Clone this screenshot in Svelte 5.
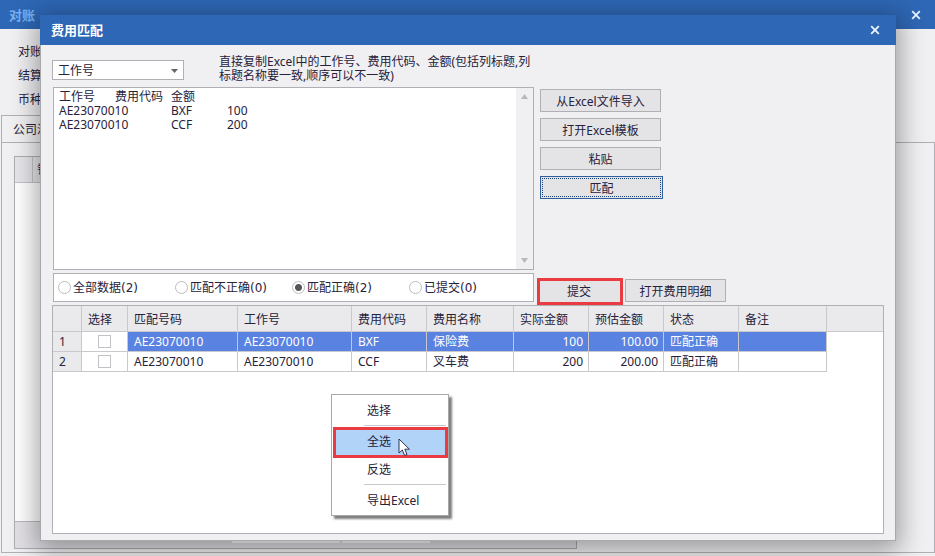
<script>
  let keyField = $state('工作号');
  let filter = $state('ok');
  let pasted = $state('工作号\t费用代码\t金额\nAE23070010\tBXF\t100\nAE23070010\tCCF\t200');

  const filters = [
    { id: 'all', label: '全部数据(2)' },
    { id: 'bad', label: '匹配不正确(0)' },
    { id: 'ok', label: '匹配正确(2)' },
    { id: 'sent', label: '已提交(0)' }
  ];

  const columns = ['选择', '匹配号码', '工作号', '费用代码', '费用名称', '实际金额', '预估金额', '状态', '备注'];

  let rows = $state([
    { code: 'AE23070010', job: 'AE23070010', fee: 'BXF', name: '保险费', actual: '100', planned: '100.00', status: '匹配正确', note: '', checked: false },
    { code: 'AE23070010', job: 'AE23070010', fee: 'CCF', name: '叉车费', actual: '200', planned: '200.00', status: '匹配正确', note: '', checked: false }
  ]);
  let current = $state(0);

  function checkAll() {
    rows.forEach((row) => (row.checked = true));
  }
  function invert() {
    rows.forEach((row) => (row.checked = !row.checked));
  }
</script>

{#snippet cross()}
  <svg width="10" height="10" viewBox="0 0 10 10" aria-hidden="true">
    <path d="M1.2 1.2 8.8 8.8M8.8 1.2 1.2 8.8" stroke="#eaf6ff" stroke-width="1.8" fill="none" />
  </svg>
{/snippet}

<div class="screen">
  <div class="parent">
    <header class="parent-title">
      <span>对账</span>
      <button class="close" aria-label="关闭对账">{@render cross()}</button>
    </header>
    <div class="fields">
      <span>对账</span>
      <span>结算</span>
      <span>币种</span>
    </div>
    <div class="tabs"><button class="tab">公司汇</button></div>
    <div class="panel">
      <div class="back-grid">
        <div class="back-head"><span class="gutter"></span><span class="back-col">销</span></div>
        <div class="back-rows"></div>
        <div class="back-foot"><span class="sum"></span><span class="sum narrow"></span></div>
      </div>
    </div>
  </div>

  <div class="dialog" role="dialog" aria-labelledby="dialog-title">
    <header class="dialog-title">
      <span id="dialog-title">费用匹配</span>
      <button class="close" aria-label="关闭">{@render cross()}</button>
    </header>

    <div class="content">
      <div class="top-row">
        <div class="combo">
          <select bind:value={keyField} aria-label="匹配字段">
            <option>工作号</option>
          </select>
          <svg width="7" height="4" viewBox="0 0 7 4" aria-hidden="true"><path d="M0 0H7L3.5 4Z" fill="#666" /></svg>
        </div>
        <p class="hint">直接复制Excel中的工作号、费用代码、金额(包括列标题,列标题名称要一致,顺序可以不一致)</p>
      </div>

      <div class="paste-row">
        <div class="paste-box">
          <textarea bind:value={pasted} aria-label="粘贴内容" spellcheck="false"></textarea>
          <div class="scroll">
            <svg width="7" height="5" viewBox="0 0 7 5" aria-hidden="true"><path d="M3.5 0 7 5H0Z" fill="#b9b9bd" /></svg>
            <svg width="7" height="5" viewBox="0 0 7 5" aria-hidden="true"><path d="M0 0H7L3.5 5Z" fill="#b9b9bd" /></svg>
          </div>
        </div>
        <div class="actions">
          <button class="btn">从Excel文件导入</button>
          <button class="btn">打开Excel模板</button>
          <button class="btn">粘贴</button>
          <button class="btn default">匹配</button>
        </div>
      </div>

      <div class="filter-row">
        <div class="filters">
          {#each filters as f}
            <label><input type="radio" name="filter" value={f.id} bind:group={filter} />{f.label}</label>
          {/each}
        </div>
        <button class="btn submit">提交</button>
        <button class="btn detail">打开费用明细</button>
      </div>

      <div class="grid">
        <table>
          <colgroup>
            <col class="w-no" /><col class="w-check" /><col class="w-code" /><col class="w-job" /><col class="w-m" />
            <col class="w-name" /><col class="w-m" /><col class="w-m" /><col class="w-m" /><col class="w-note" /><col />
          </colgroup>
          <thead>
            <tr>
              <th></th>
              {#each columns as c}<th>{c}</th>{/each}
              <th class="rest"></th>
            </tr>
          </thead>
          <tbody>
            {#each rows as row, i}
              <tr class:current={current === i} onclick={() => (current = i)}>
                <th>{i + 1}</th>
                <td class="check"><input type="checkbox" bind:checked={row.checked} aria-label="选择第{i + 1}行" /></td>
                <td>{row.code}</td>
                <td>{row.job}</td>
                <td>{row.fee}</td>
                <td>{row.name}</td>
                <td class="num">{row.actual}</td>
                <td class="num">{row.planned}</td>
                <td>{row.status}</td>
                <td>{row.note}</td>
                <td class="rest"></td>
              </tr>
            {/each}
          </tbody>
        </table>

        <div class="menu" role="menu">
          <button role="menuitem">选择</button>
          <hr />
          <button role="menuitem" class="active" onclick={checkAll}>全选</button>
          <button role="menuitem" class="short" onclick={invert}>反选</button>
          <hr class="low" />
          <button role="menuitem">导出Excel</button>
          <svg class="pointer" width="14" height="19" viewBox="0 0 14 19" aria-hidden="true">
            <path d="M1 1V15L4.3 12 6.6 17.5 9 16.5 6.8 11.2H11.4Z" fill="#fff" stroke="#2c3550" stroke-width="1" />
          </svg>
        </div>
      </div>
    </div>
  </div>
</div>

<style>
  :global(body) { margin: 0; }
  .screen, .screen * { box-sizing: border-box; }
  .screen {
    position: relative;
    min-height: 100vh;
    overflow: hidden;
    display: flex;
    font: 12px/14px "Noto Sans", "Noto Sans CJK SC", sans-serif;
    color: #27223a;
    background: #f0eff1;
  }
  button, select, textarea { font: inherit; color: inherit; margin: 0; }

  .parent { flex: 1; display: flex; flex-direction: column; padding-bottom: 3px; }
  .parent-title, .dialog-title {
    display: flex;
    justify-content: space-between;
    align-items: center;
    background: #2e67b5;
    font-size: 13px;
    font-weight: bold;
  }
  .parent-title { height: 29px; padding: 0 9px; color: #77b0f0; }
  .dialog-title { height: 31px; margin: 0 -1px; padding: 0 11px; border-top: 1px solid #27589c; color: #fff; }
  .close { display: flex; align-items: center; justify-content: center; width: 20px; height: 20px; padding: 0; border: 0; background: none; }
  .fields { display: flex; flex-direction: column; gap: 10px; padding: 16px 18px 0; height: 86px; }
  .tabs { display: flex; height: 27px; padding-left: 1px; }
  .tab { width: 80px; padding: 2px 0 0 11px; text-align: left; border: 1px solid #b0b0b4; border-bottom: 0; background: #f0eff1; }
  .panel { flex: 1; display: flex; margin-left: 1px; padding: 13px 12px 3px; border: 1px solid #b0b0b4; }
  .back-grid { flex: 0 1 563px; display: flex; flex-direction: column; border: 1px solid #adadb2; background: #fff; }
  .back-head { display: flex; height: 26px; background: #e6e5e9; border-bottom: 1px solid #c4c4c8; }
  .gutter { width: 18px; border-right: 1px solid #c4c4c8; }
  .back-col { padding: 6px 4px; }
  .back-rows { flex: 1; }
  .back-foot { display: flex; gap: 2px; height: 27px; padding: 0 0 5px 217px; background: #e2e0e5; border-top: 1px solid #b8b8bc; }
  .sum { width: 108px; background: #fff; }
  .narrow { width: 88px; }

  .dialog {
    position: absolute;
    inset: 14px 39px 15px 40px;
    display: flex;
    flex-direction: column;
    border: 1px solid #a9a8ad;
    border-top: 0;
    background: #f0eff1;
    box-shadow: 0 6px 24px 4px rgba(0, 0, 0, 0.35);
  }
  .content { flex: 1; display: flex; flex-direction: column; padding: 9px 11px 6px; }
  .top-row { display: flex; gap: 35px; height: 33px; }
  .combo { position: relative; width: 132px; height: 20px; margin-top: 6px; }
  .combo select { appearance: none; width: 100%; height: 100%; padding: 2px 5px 0; border: 1px solid #b0b0b4; border-radius: 0; background: #fff; }
  .combo svg { position: absolute; right: 6px; top: 9px; pointer-events: none; }
  .hint { width: 316px; margin: 1px 0 0; }

  .paste-row, .filter-row { display: flex; padding-left: 1px; }
  .paste-row { gap: 6px; height: 183px; }
  .paste-box, .filters { flex: 0 1 481px; border: 1px solid #b0b0b4; background: #fff; }
  .paste-box { display: flex; }
  textarea { flex: 1; min-width: 0; padding: 2px 5px; border: 0; outline: 0; resize: none; background: none; tab-size: 56px; white-space: pre; overflow: hidden; }
  .scroll { display: flex; flex-direction: column; align-items: center; justify-content: space-between; width: 17px; padding: 6px 0; background: #f0eff1; }
  .actions { display: flex; flex-direction: column; align-items: flex-start; gap: 6px; padding-top: 2px; }
  .btn { width: 121px; height: 23px; padding: 2px 0 0; border: 1px solid #b0b0b4; border-radius: 0; background: #e4e4e7; }
  .default { width: 123px; border-color: #2e5f9f; outline: 1px dotted #1d3f7a; outline-offset: -3px; }

  .filter-row { height: 35px; padding-top: 3px; }
  .filters { display: flex; align-items: center; height: 29px; padding-left: 4px; font-family: "DejaVu Sans", "Noto Sans CJK SC", sans-serif; }
  .filters label { display: flex; align-items: center; gap: 2px; width: 117px; white-space: nowrap; }
  .filters input { appearance: none; width: 13px; height: 13px; margin: 0; border: 1px solid #bdbdc1; border-radius: 50%; background: #fff; }
  .filters input:checked { background: radial-gradient(circle, #55555c 0 3px, #fff 4px); }
  .submit { width: 86px; height: 27px; margin: 5px 2px 0 3px; padding: 0 2px 0 0; border: 3px solid #e93b41; }
  .detail { width: 101px; margin-top: 6px; }

  .grid { position: relative; flex: 1; border: 1px solid #b0b0b4; background: #fff; }
  table { width: 100%; table-layout: fixed; border-collapse: separate; border-spacing: 0; }
  .w-no { width: 29px; }
  .w-check { width: 46px; }
  .w-code { width: 110px; }
  .w-job { width: 114px; }
  .w-m { width: 75px; }
  .w-name { width: 87px; }
  .w-note { width: 88px; }
  th, td { height: 20px; padding: 0 6px; text-align: left; font-weight: normal; white-space: nowrap; border: solid #c9c9cd; border-width: 0 1px 1px 0; }
  th { background: #eaeaed; }
  thead th { height: 26px; padding-top: 2px; }
  td.num { text-align: right; padding-right: 5px; }
  .check { text-align: center; }
  .check input { appearance: none; display: block; width: 13px; height: 13px; margin: 0 auto; border: 1px solid #c2c2c6; background: #fff; }
  .check input:checked { background: #55555c; box-shadow: inset 0 0 0 2px #fff; }
  .current td:not(.check):not(.rest) { background: #5a82e1; color: #fff; }
  thead .rest { border-right: 0; }
  td.rest { border: 0; }

  .menu { position: absolute; left: 278px; top: 88px; width: 118px; border: 1px solid #a8a8ac; background: #fff; box-shadow: 3px 3px 2px rgba(0, 0, 0, 0.5); }
  .menu button { display: block; width: 100%; height: 30px; padding: 2px 0 0 35px; border: 0; background: none; text-align: left; }
  .menu .active { width: 115px; height: 31px; margin-left: 1px; padding: 0 0 2px 31px; border: 3px solid #e93b41; background: #b0d3f7; }
  .menu .short { height: 22px; }
  hr { height: 1px; margin: 0 2px 1px 32px; border: 0; background: #c9c9cd; }
  .low { margin: 4px 2px 0 32px; }
  .pointer { position: absolute; left: 66px; top: 43px; pointer-events: none; }
</style>
